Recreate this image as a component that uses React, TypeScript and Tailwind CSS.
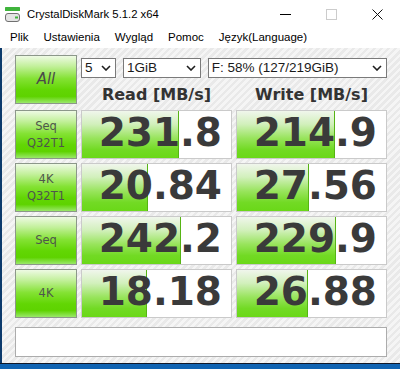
import {FC} from "react";

const ui = "font-['Liberation_Sans',Arial,sans-serif]";
const dv = "font-['DejaVu_Sans',Verdana,sans-serif]";

const btnBg =
  "bg-[linear-gradient(to_bottom,#eefae4_0%,#c2f09a_22%,#84e234_48%,#62d604_72%,#5ed300_86%,#9ae86a_100%)]";
const fillBg =
  "bg-[linear-gradient(to_bottom,#f0f6ec_0%,#d2f0bc_28%,#98e45c_58%,#72da24_82%,#6ad818_100%)]";

const rows = [
  {label: ["Seq", "Q32T1"], read: "231.8", rw: 98, write: "214.9", ww: 99},
  {label: ["4K", "Q32T1"], read: "20.84", rw: 67, write: "27.56", ww: 73},
  {label: ["Seq"], read: "242.2", rw: 100, write: "229.9", ww: 100},
  {label: ["4K"], read: "18.18", rw: 66, write: "26.88", ww: 72},
];

const Chevron = () => (
  <svg width="10" height="6" viewBox="0 0 10 6" className="shrink-0">
    <path d="M1 1 L5 5 L9 1" fill="none" stroke="#1e1e1e" strokeWidth="1.6" />
  </svg>
);

const Select: FC<{text: string; w: string}> = ({text, w}) => (
  <div
    className={`${w} h-[20px] flex items-center justify-between bg-white border border-[#7a7a7a] pl-[3px] pr-[4px] text-[13.5px] text-[#1a1a1a] ${ui}`}
  >
    <span className="leading-none">{text}</span>
    <Chevron />
  </div>
);

const LabelBtn: FC<{lines: string[]}> = ({lines}) => (
  <div
    className={`h-[49px] flex flex-col items-center justify-center border border-[#8c978a] ${btnBg} text-[11.5px] leading-[17px] text-[#4e564c] ${dv}`}
  >
    {lines.map((l) => (
      <span key={l}>{l}</span>
    ))}
  </div>
);

const ValueCell: FC<{value: string; fill: number}> = ({value, fill}) => (
  <div className="relative h-[49px] border border-[#cacaca] bg-white overflow-hidden">
    <div
      className={`absolute left-0 top-0 bottom-0 ${fillBg} border-r border-[#56b414]`}
      style={{width: fill - 1}}
    />
    <div
      className={`relative h-full flex items-center justify-end pr-[9px] pb-[4px] text-[39px] leading-[39px] font-bold text-[#3a3a3a] ${dv}`}
    >
      {value}
    </div>
  </div>
);

const AppIcon = () => (
  <svg width="16" height="16" viewBox="0 0 16 16">
    <rect x="0" y="0" width="15" height="4" rx="0.5" fill="#3fb43c" />
    <rect x="0.5" y="6.5" width="14" height="8" rx="2.5" fill="#e4e4e4" stroke="#707070" />
    <rect x="10" y="9.5" width="3" height="2" fill="#3fb43c" />
  </svg>
);

export default function App() {
  return (
    <div className="w-[400px] h-[369px] flex flex-col overflow-hidden bg-white">
      {/* title bar */}
      <div className="h-[28px] flex items-center shrink-0">
        <div className="ml-[5px] mt-[1px]">
          <AppIcon />
        </div>
        <span className={`ml-[6px] text-[11.3px] text-black ${ui}`}>
          CrystalDiskMark 5.1.2 x64
        </span>
        <div className="ml-auto flex h-full">
          <div className="w-[46px] flex items-center justify-center">
            <div className="w-[11px] h-px bg-black mt-[1px]" />
          </div>
          <div className="w-[46px] flex items-center justify-center">
            <div className="w-[11px] h-[11px] border border-[#cccccc]" />
          </div>
          <div className="w-[46px] flex items-center justify-center">
            <svg width="11" height="11" viewBox="0 0 11 11">
              <path d="M0.5 0.5 L10.5 10.5 M10.5 0.5 L0.5 10.5" stroke="#111" strokeWidth="1" />
            </svg>
          </div>
        </div>
      </div>

      {/* menu bar */}
      <div className={`h-[20px] flex items-center gap-[15px] pl-[10px] text-[11.5px] text-black shrink-0 ${ui}`}>
        <span>Plik</span>
        <span>Ustawienia</span>
        <span>Wygląd</span>
        <span>Pomoc</span>
        <span>Język(Language)</span>
      </div>

      {/* client */}
      <div className="h-[315px] flex shrink-0">
        <div className="w-[2px] bg-[#0c3a6c]" />
        <div className="flex-1 pl-[13px] pt-[7px] bg-[repeating-linear-gradient(135deg,#f5f5f5_0px,#f5f5f5_2.5px,#e9e9e9_2.5px,#e9e9e9_5px)]">
          <div className="grid grid-cols-[62px_151px_151px] gap-x-[4px] gap-y-[4px]">
            <div className="h-[51px]">
              <div
                className={`h-[49px] flex items-center justify-center border border-[#8c978a] ${btnBg} text-[15px] italic text-[#4a4a4a] ${dv}`}
              >
                All
              </div>
            </div>
            <div className="col-span-2 flex flex-col">
              <div className="flex gap-[7px] mt-[3px]">
                <Select text="5" w="w-[35px]" />
                <Select text="1GiB" w="w-[78px]" />
                <Select text="F: 58% (127/219GiB)" w="w-[180px]" />
              </div>
              <div
                className={`grid grid-cols-2 gap-x-[4px] mt-[8px] h-[18px] text-[16px] leading-[18px] font-bold text-[#333] ${dv}`}
              >
                <span className="text-center">Read [MB/s]</span>
                <span className="text-center">Write [MB/s]</span>
              </div>
            </div>

            {rows.map((r) => (
              <div key={r.read} className="contents">
                <LabelBtn lines={r.label} />
                <ValueCell value={r.read} fill={r.rw} />
                <ValueCell value={r.write} fill={r.ww} />
              </div>
            ))}

            <div className="col-span-3 mt-[5px] h-[30px] bg-white border border-[#acacac]" />
          </div>
        </div>
      </div>

      <div className="h-px bg-[#101828] shrink-0" />
      <div className="flex-1 bg-[#0f63b2]" />
    </div>
  );
}
